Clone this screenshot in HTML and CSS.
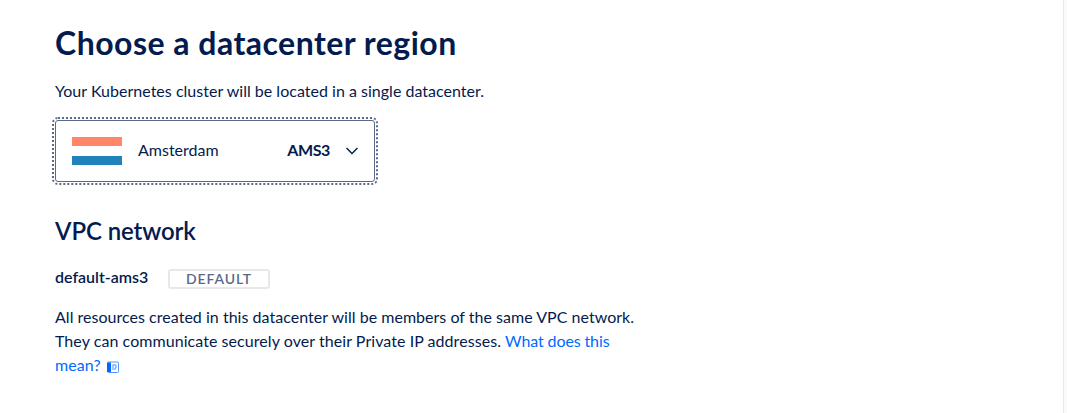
FILE: index.html
```html
<!DOCTYPE html>
<html lang="en">
<head>
<meta charset="utf-8">
<title>Choose a datacenter region</title>
<link rel="stylesheet" href="styles.css">
</head>
<body>
<main class="page">
  <h1 class="title">Choose a datacenter region</h1>
  <p class="intro">Your Kubernetes cluster will be located in a single datacenter.</p>
  <button class="region" type="button">
    <svg class="flag" width="50" height="28" viewBox="0 0 50 28"><path fill="#ff8768" d="M0 0h50v9H0z"/><path fill="#fff" d="M0 9h50v10H0z"/><path fill="#2081bb" d="M0 19h50v9H0z"/></svg>
    <span class="city">Amsterdam</span>
    <span class="code">AMS3</span>
    <svg class="chevron" width="14" height="10" viewBox="0 0 14 10"><path d="M1.500 2 7 7.500 12.500 2" fill="none" stroke="#031b4e" stroke-width="1.400"/></svg>
  </button>
  <h2 class="subtitle">VPC network</h2>
  <div class="network">
    <span class="name">default-ams3</span>
    <span class="badge">DEFAULT</span>
  </div>
  <p class="note">
    <span class="line1">All resources created in this datacenter will be members of the same VPC network.</span><br>
    <span class="line2">They can communicate securely over their Private IP addresses.</span> <a class="link"><span class="link1">What does this</span><br><span class="link2">mean?</span><svg class="doc" width="12" height="12" viewBox="0 0 12 12"><rect x=".5" y="1" width="11" height="10.500" rx="1" fill="#fff" stroke="#5298ff"/><path fill="#0069ff" d="M0 1.500h4v9.500H0z"/><path d="M6 3.500v5.500M6 4h3v3H8v2" fill="none" stroke="#4a93ff"/></svg></a>
  </p>
</main>
</body>
</html>
```
FILE: styles.css
```css
body {
  margin: 0;
  background: #fff;
  color: #031b4e;
  font-family: Lato, "Liberation Sans", sans-serif;
  font-size: 16px;
  line-height: 24px;
}
.page {
  box-sizing: border-box;
  width: 1064px;
  height: 413px;
  padding: 23px 0 0 55px;
  border-right: 1px solid #e5e8ed;
  overflow: hidden;
  box-shadow: 3px 0 0 #fafafa;
  white-space: nowrap;
}
.title {
  margin: 0;
  font-size: 32px;
  line-height: 40px;
  font-weight: 700;
  letter-spacing: .48px;
}
.intro { margin: 16px 0 17px; letter-spacing: .016px; }
.region {
  display: flex;
  align-items: center;
  box-sizing: border-box;
  width: 320px;
  height: 62px;
  padding: 0 15px 0 16px;
  border: 1px solid #5b6987;
  border-radius: 3px;
  outline: 2px dotted #5b6987;
  outline-offset: 1px;
  background: #fff;
  color: inherit;
  font: inherit;
}
.city { margin-left: 16px; padding-bottom: 2px; }
.code { margin-left: auto; padding-bottom: 2px; font-weight: 700; letter-spacing: -.4px; }
.chevron { margin-left: 15px; }
.subtitle {
  margin: 33px 0 0;
  font-size: 24px;
  line-height: 32px;
  font-weight: 600;
  letter-spacing: -.1px;
}
.network {
  display: flex;
  align-items: center;
  height: 24px;
  margin-top: 18px;
}
.name { width: 113px; font-weight: 600; }
.badge {
  box-sizing: border-box;
  width: 102px;
  height: 20px;
  margin-top: 4px;
  border: 2px solid #e5e8ed;
  border-radius: 3px;
  color: #5b6987;
  font-size: 14px;
  line-height: 15px;
  font-weight: 600;
  letter-spacing: .9px;
  text-align: center;
}
.note { margin: 16px 0 0; }
.line1 { letter-spacing: .025px; }
.line2 { letter-spacing: .06px; }
.link { color: #0069ff; }
.link1 { letter-spacing: -.12px; }
.link2 { letter-spacing: .1px; }
.doc { margin-left: 6px; vertical-align: -2px; }
```
